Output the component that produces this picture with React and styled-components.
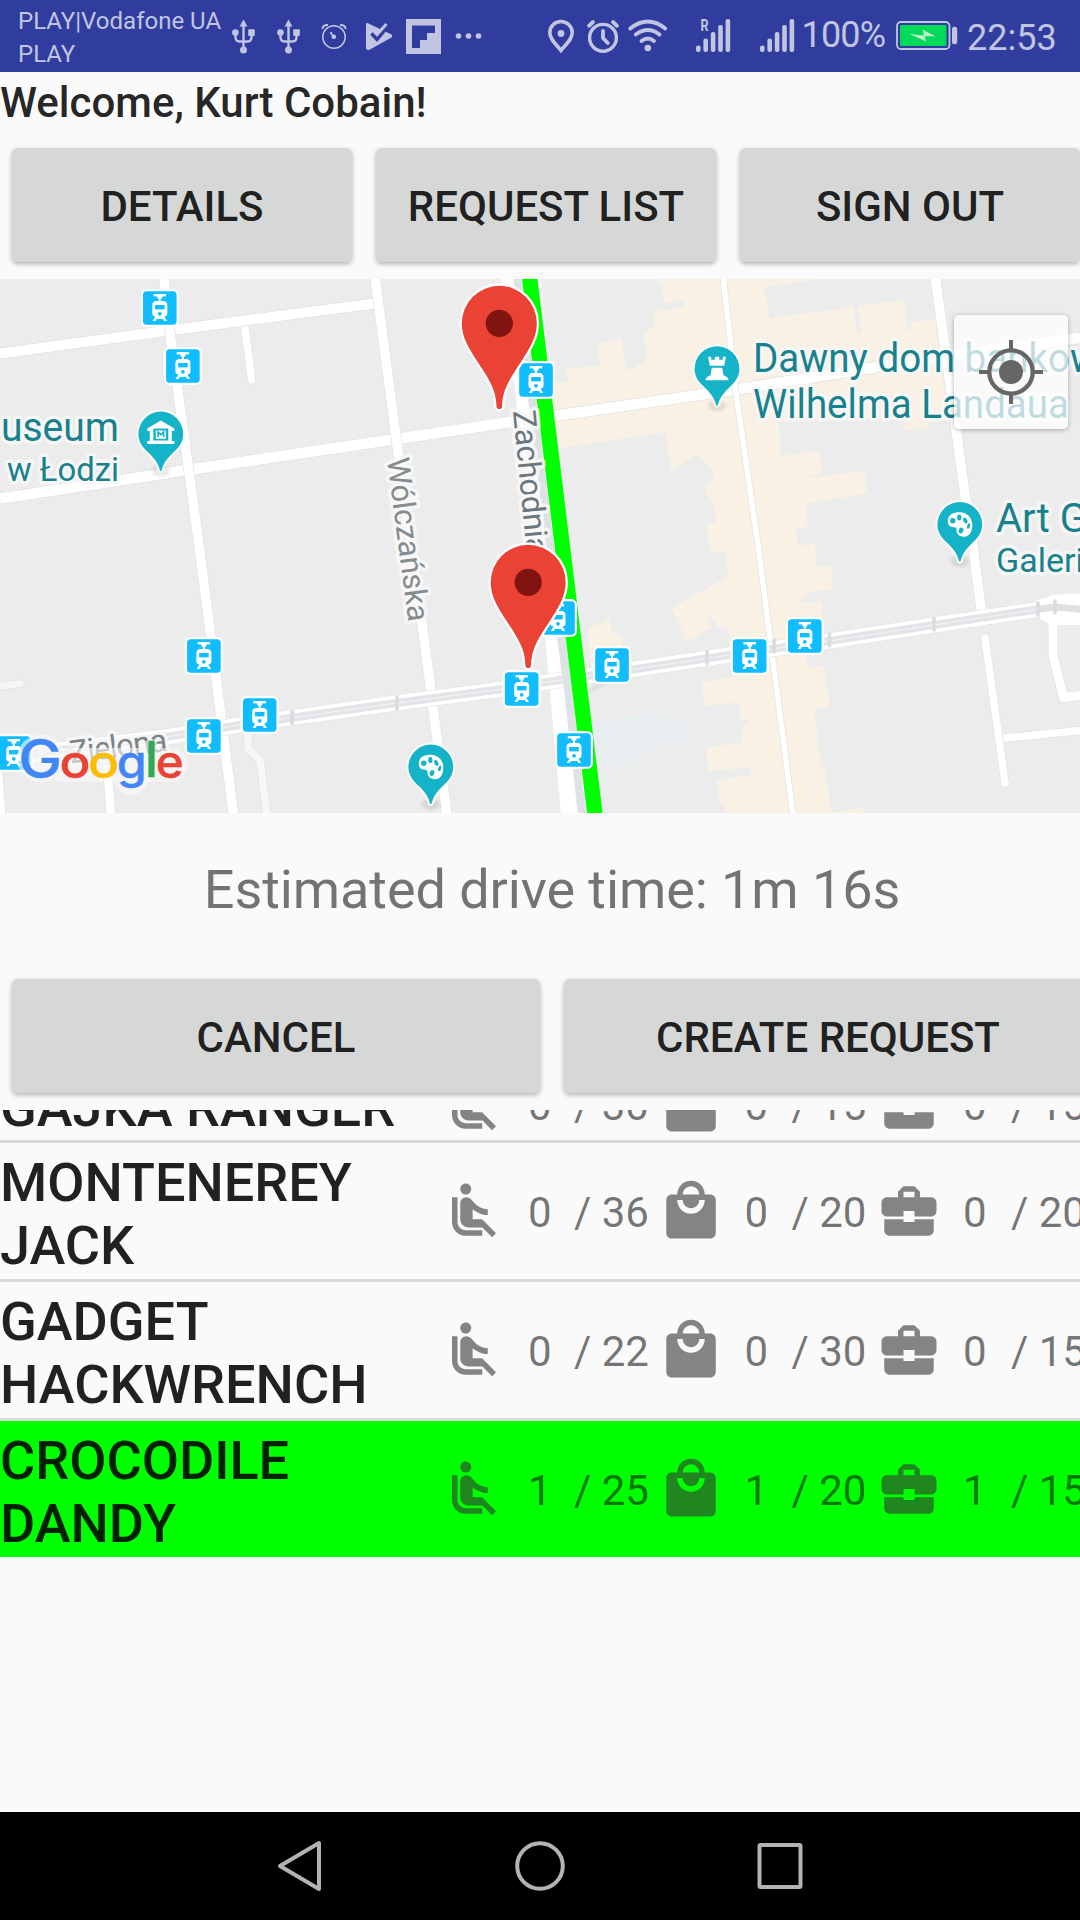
import React from 'react';
import styled, { createGlobalStyle } from 'styled-components';

const Global = createGlobalStyle`
  *, *::before, *::after { box-sizing: border-box; }
  html, body { margin: 0; padding: 0; }
  body {
    width: 1080px;
    height: 1920px;
    overflow: hidden;
    background: #fafafa;
    font-family: Roboto, "Noto Sans", sans-serif;
  }
`;

const Screen = styled.div`
  width: 1080px;
  height: 1920px;
  display: flex;
  flex-direction: column;
  overflow: hidden;
  background: #fafafa;
`;

/* ---------- status bar ---------- */

const StatusBar = styled.header`
  flex: none;
  height: 72px;
  display: flex;
  align-items: flex-start;
  padding-left: 18px;
  background: #303d9f;
  color: #c1c5e2;
`;

const Carrier = styled.div`
  width: 214px;
  padding-top: 5px;
  font-size: 24px;
  line-height: 33px;
  white-space: pre-line;
`;

const StatusIcon = styled.svg`
  flex: none;
  display: block;
  height: 72px;
  width: ${(p) => p.$w}px;
  margin-right: ${(p) => p.$after || 0}px;
  overflow: visible;
  fill: #c1c5e2;
`;

const StatusText = styled.span`
  width: ${(p) => p.$w}px;
  padding-top: ${(p) => p.$top}px;
  font-size: 36px;
  line-height: 42px;
  letter-spacing: ${(p) => p.$track || 0}px;
  white-space: nowrap;
`;

const line = { fill: 'none', stroke: '#c1c5e2' };

const Usb = ({ after }) => (
  <StatusIcon $w={23} $after={after} viewBox="0 0 23 72">
    <path d="M11.5 22v27M3.5 33v4q0 4.5 4 4.5h8q4 0 4-4.5v-4" {...line} strokeWidth="2.4" />
    <path d="M11.5 19.5l4 7h-8z" />
    <circle cx="11.5" cy="50" r="3.5" />
    <circle cx="3.4" cy="32.6" r="3.3" />
    <rect x="16.2" y="29.3" width="6.6" height="6.6" rx="1" />
  </StatusIcon>
);

const Clock = () => (
  <StatusIcon $w={26} $after={19} viewBox="0 0 26 72">
    <circle cx="13" cy="37" r="11.2" {...line} strokeWidth="1.5" />
    <path d="M1.6 29q-.6-4 5.4-4M24.4 29q.6-4-5.4-4" {...line} strokeWidth="2" />
    <path d="M9.5 32.5l3 4" {...line} strokeWidth="1.6" />
    <circle cx="12.8" cy="36.8" r="2.3" />
    <circle cx="10" cy="33" r="1.1" />
  </StatusIcon>
);

const PlayCheck = () => (
  <StatusIcon $w={27} $after={13} viewBox="0 0 27 72">
    <path d="M0 24.500q0-2 2-1.300L25.500 34.500q1.500 1.500 0 3L3 50q-3 .5-3-2z" />
    <path d="M5.500 33.500l5.500 6L22.500 25.500 19 22" {...line} stroke="#303d9f" strokeWidth="3.400" />
    <path d="M10.500 35L20.500 24" {...line} strokeWidth="3" />
  </StatusIcon>
);

const Flip = () => (
  <StatusIcon $w={35} $after={15} viewBox="0 0 35 72">
    <path fillRule="evenodd" d="M0 19h35v35H0zM6 25.500v22.500h8v-8h7v-7h8v-7.500z" />
  </StatusIcon>
);

const Dots = () => (
  <StatusIcon $w={26} $after={66} viewBox="0 0 26 72">
    {[2.5, 12.5, 22.5].map((x) => (
      <circle key={x} cx={x} cy="36" r="2.8" />
    ))}
  </StatusIcon>
);

const Place = () => (
  <StatusIcon $w={26} $after={12.5} viewBox="0 0 26 72">
    <path
      d="M13 50.500C8 44 1.800 39.500 1.800 32.500a11.200 11 0 0 1 22.400 0C24.200 39.500 18 44 13 50.500z"
      {...line}
      strokeWidth="3.6"
    />
    <circle cx="13" cy="33.500" r="3.400" />
  </StatusIcon>
);

const Alarm = () => (
  <StatusIcon $w={32} $after={9.5} viewBox="0 0 32 72">
    <circle cx="16" cy="37.800" r="13.400" {...line} strokeWidth="3.400" />
    <path
      d="M16 31v7l4.800 5M2 25.800l4-3.800M30 25.800l-4-3.800"
      {...line}
      strokeWidth="3.800"
      strokeLinecap="round"
    />
  </StatusIcon>
);

const Wifi = () => (
  <StatusIcon $w={40} $after={27.5} viewBox="0 0 40 72">
    <g {...line} strokeWidth="3.800" strokeLinecap="round">
      <path d="M2.200 28.500Q20 14.500 37.200 28.500" />
      <path d="M7.800 34.500Q20 25.500 31.500 34.500" />
      <path d="M13.500 41Q20 36 26 41" />
    </g>
    <circle cx="19.800" cy="48" r="3.300" />
  </StatusIcon>
);

const Signal = ({ roaming, after }) => (
  <StatusIcon $w={34} $after={after} viewBox="0 0 34 72">
    {[45.5, 38.5, 32, 25, 19].map((top, i) => (
      <rect key={top} x={i * 7.4} y={top} width="4.6" height={52 - top} rx="2" />
    ))}
    {roaming && (
      <text x="4.500" y="31" fontSize="16" fontWeight="700" textLength="8" lengthAdjust="spacingAndGlyphs">
        R
      </text>
    )}
  </StatusIcon>
);

const Battery = () => (
  <StatusIcon $w={62} $after={9.5} viewBox="0 0 62 72">
    <rect x="1" y="22" width="52.500" height="27" rx="4" {...line} strokeWidth="1.800" />
    <rect x="4" y="25" width="46.500" height="21" rx="1" fill="#00d95a" />
    <path d="M13.500 34l14.500 1.500-1.500-6 13.500 7-11-.500 1 5.500z" fill="#b5f3cc" />
    <rect x="56" y="26.700" width="5.200" height="17.600" rx="2.400" />
  </StatusIcon>
);

/* ---------- common parts ---------- */

const Welcome = styled.h1`
  flex: none;
  height: 64px;
  margin: 0;
  padding-top: 6px;
  font-size: 42px;
  line-height: 49px;
  font-weight: 500;
  color: rgba(0, 0, 0, 0.87);
`;

const ButtonRow = styled.div`
  flex: none;
  width: 1104px;
  height: 143px;
  display: flex;
  align-items: flex-start;
  gap: 24px;
  padding: 12px 12px 0;
`;

const Button = styled.button`
  flex: none;
  width: ${(p) => p.$w}px;
  height: 114px;
  padding: 4px 0 0;
  border: 0;
  border-radius: 6px;
  background: #d6d8d7;
  color: rgba(0, 0, 0, 0.87);
  font: 500 42px/50px Roboto, sans-serif;
  text-align: center;
  text-transform: uppercase;
  white-space: nowrap;
  box-shadow: 0 2px 5px rgba(0, 0, 0, 0.3);
`;

const Estimate = styled.p`
  flex: none;
  width: 1104px;
  height: 154px;
  margin: 0;
  padding-top: 45px;
  font-size: 54px;
  line-height: 63px;
  letter-spacing: -0.09px;
  text-align: center;
  color: rgba(0, 0, 0, 0.54);
`;

/* ---------- map ---------- */

const MapFrame = styled.section`
  flex: none;
  position: relative;
  width: 1080px;
  height: 534px;
  overflow: hidden;
  background: #ececec;
`;

const MapCanvas = styled.svg`
  display: block;
  width: 1080px;
  height: 534px;
  font-family: Roboto, sans-serif;
`;

const LocateButton = styled.button`
  position: absolute;
  top: 36px;
  right: 12px;
  width: 114px;
  height: 114px;
  display: grid;
  place-items: center;
  padding: 0;
  border: 0;
  border-radius: 5px;
  background: rgba(255, 255, 255, 0.72);
  box-shadow: 0 1px 5px rgba(0, 0, 0, 0.3);
`;

const Halo = styled.text`
  paint-order: stroke;
  stroke: rgba(248, 248, 248, 0.85);
  stroke-width: 7px;
  stroke-linejoin: round;
  fill: ${(p) => p.$fill || '#17818d'};
`;

const Road = ({ d, w = 9.5, c = '#fff', round }) => (
  <>
    <path d={d} fill="none" stroke="#e2e2e2" strokeWidth={w + 1.4} strokeLinecap={round ? 'round' : 'butt'} />
    <path d={d} fill="none" stroke={c} strokeWidth={w} strokeLinecap={round ? 'round' : 'butt'} strokeLinejoin="round" />
  </>
);

const Tram = ({ x, y }) => (
  <g transform={`translate(${x} ${y})`}>
    <rect x="-19" y="-19" width="38" height="38" rx="6" fill="#fff" />
    <rect x="-16.800" y="-16.700" width="33.600" height="33.400" rx="3.500" fill="#12bdff" />
    <g fill="#fff">
      <rect x="-6.200" y="-14" width="12.400" height="2.400" />
      <path d="M-2.500-12h5v2.500h-1.500v3h-2v-3h-1.500z" />
      <path d="M-4.500-7h9q3 1 3 4v9q0 2-3 2.600l2.700 4.400h-3l-1-1.900h-6.400l-1 1.900h-3l2.700-4.400q-3-.6-3-2.600v-9q0-3 3-4z" />
    </g>
    <rect x="-4.800" y="-3" width="9.600" height="4.400" fill="#12bdff" />
    <circle cy="5.800" r="1.900" fill="#12bdff" />
  </g>
);

const Marker = ({ x, y }) => (
  <g transform={`translate(${x} ${y})`}>
    <path
      d="M-37.500 0A37.500 37.500 0 0 1 37.500 0C37.500 14 30.500 25 22.500 37.500 11 55 3 66 2.800 83a2.800 2.800 0 0 1-5.600 0C-3 66-11 55-22.500 37.500-30.500 25-37.500 14-37.500 0z"
      fill="#ea4335"
      stroke="#fff"
      strokeWidth="4.500"
      paintOrder="stroke"
    />
    <circle r="13.600" fill="#7f1410" />
  </g>
);

const Poi = ({ x, y, children }) => (
  <g transform={`translate(${x} ${y})`}>
    <ellipse cy="37" rx="11" ry="7" fill="rgba(0,0,0,.03)" />
    <ellipse cy="37" rx="8" ry="5" fill="rgba(0,0,0,.05)" />
    <path
      d="M-22.400 0A22.400 22.400 0 0 1 22.400 0C22.400 9 17 14.500 11.500 19.500 5 26 2.500 30 .8 36.500q-.8 1.200-1.600 0C-2.500 30-5 26-11.500 19.500-17 14.500-22.400 9-22.400 0z"
      fill="#15b3c8"
      stroke="#fafafa"
      strokeWidth="4"
      paintOrder="stroke"
    />
    {children}
  </g>
);

const Palette = () => (
  <>
    <path d="M-12 -3.500C-12-11-5-12.500 0-12.300 8-12 13-6 12.500 1.500 12.300 8 9 12.500 4 12.300-1 12-3.500 9-3.200 5.500-3 2.500-5.500 3-8 2.500-10.500 2-12 0-12-3.500z" fill="#fff" />
    <g fill="#15b3c8">
      <circle cx="-7" cy="-3.800" r="2.700" />
      <ellipse cx="-.5" cy="-7" rx="2.200" ry="3" />
      <ellipse cx="5.500" cy="-4" rx="1.900" ry="3" transform="rotate(-25 5.500 -4)" />
      <ellipse cx="8.800" cy="1.500" rx="1.500" ry="2.900" transform="rotate(20 8.800 1.500)" />
      <ellipse cx="1.200" cy="6" rx="2.300" ry="3" transform="rotate(20 1.200 6)" />
    </g>
  </>
);

const Castle = () => (
  <path d="M-9-12h3.200v3h3.600v-3h4.400v3h3.600v-3H9L7.200-3H-7.200zM-5.200-1H5.200L6.500 6.500Q11.500 8.500 11.500 11.500H-11.500Q-11.500 8.500-6.500 6.500z" fill="#fff" />
);

const Museum = () => (
  <>
    <path d="M0-13.500L13.500-5.500V-3H11V7h2.500v3h-27V7h2.500V-3h-2.500v-2.500z" fill="#fff" />
    <path d="M-7.500-5.500h15V6.500h-15z" fill="#15b3c8" />
    <path d="M-5-3.500H5V4.800H-5z" fill="#fff" />
    <path d="M-2.800 3.300v-5.300l2.800 2.800 2.800-2.800v5.300" fill="none" stroke="#15b3c8" strokeWidth="1.600" />
  </>
);

const TRAM =
  'M-4 760L60 750 172 736 234 726 396 703 503 689 540 683 636 669 729 655 829 641 934 625 1040 609';
const ZACH = 'M517 275L559 620 568 690 582 815';
const TRAMS = [
  [159.8, 308], [182.9, 366], [536, 380], [203.9, 656], [259.7, 715], [203.9, 736],
  [521.7, 689], [13.8, 753], [558, 618], [612, 665], [749.7, 656], [804.8, 636], [574, 750],
];
const TICKS = [
  [292, 717.5], [397, 703], [707, 657.5], [774, 646], [829.5, 640], [934, 624], [1038, 609], [1055, 607],
];
const LOGO = [
  ['G', 18.5, 777.5, 53, '#4285f4', 43.5],
  ['o', 59.5, 777.5, 46, '#ea4335', 31],
  ['o', 88.1, 777.5, 46, '#fbbc05', 31],
  ['g', 116.8, 777.5, 46, '#4285f4', 30],
  ['l', 145, 777, 49, '#34a853', 13],
  ['e', 155.8, 777.5, 46, '#ea4335', 28],
];

const CityMap = () => (
  <MapCanvas viewBox="0 279 1080 534">
    <rect y="279" width="1080" height="534" fill="#ececec" />
    <g fill="#f9f1e3">
      <g transform="translate(540 270) scale(.34435 .33333)">
        <path d="M340 27L355 45 360 98 415 90 423 108 328 127 333 165 300 195 312 270 252 305 237 208 165 220 175 285 75 297 82 332 20 342 40 536 365 487 381 600 457 552 502 600 502 625 477 662 505 700 513 757 483 762 493 845H750L743 775 777 770 772 700 952 670 941 602 758 627 818 611 812 543 700 558 693 455 1057 440 1060 480 1125 472 1130 445 1185 440 1165 300 1147 148 1076 157 1080 178 1067 182 1058 90 925 108 934 187 920 190 912 112 667 145 650 52 815 27z" />
      </g>
      <g transform="translate(540 540) scale(.34435 .33333)">
        <path d="M490 0L495 20 515 15 537 37 548 107 382 205 428 305 500 265 485 230 492 222 523 270 547 262 558 412 470 428 477 497 578 487 584 540 603 541V556L583 558 586 607 482 623 491 694 612 682 613 705 514 720 522 790 535 792 538 822H940L938 803 845 818 828 680 815 678 797 508 842 500 825 378 780 384 773 350 820 240 817 183 755 190 752 176 773 172 770 158 852 147 844 77 804 80 798 12 748 17 745 0z" />
        <path d="M137 268L203 235 208 275 240 290 245 390 150 390z" />
      </g>
    </g>
    <path d="M592 720L653 714 686 720V742L641 751 639 764 598 767z" fill="#e8edf0" />

    <Road d="M0 686L20.500 683.500" w={7} c="#f6f6f6" round />
    <Road d="M248 730V748L260 760 267 815" w={7.5} c="#f7f7f7" />
    <Road d="M107 765L111 815" w={8.5} />
    <Road d="M-2 765L2 815" w={7} />
    <Road d="M244.500 325L251.700 380" w={7.5} round />
    <Road d="M0 353.500L172 330 378 303" w={10} />
    <Road d="M0 498.500L187.700 470 513 421.700" w={10.5} />
    <Road d="M540 418L733 390 953 355 1080 338" w={10.5} />
    <Road d="M163.500 275L170.500 337 199 545 220.500 713 233.500 815" />
    <Road d="M374.700 275L399 460 422 623 447 815" />
    <Road d="M723 275L736 393 758 545 793 815" w={5.5} />
    <Road d="M935 275L965.300 497 972 540 981.500 612" />
    <Road d="M1001 738.500L1080 730.500" w={7.5} />
    <Road d="M985 638L1005 783" w={7.5} round />
    <Road d="M1053 620V655L1063.500 697.500 1084 695" w={9} />
    <path d="M1030 603L1053 595 1084 593V625H1050L1038 617z" fill="#fff" />
    <path d="M501 275L545 637 561 815H590L540 275z" fill="#fff" />

    <Road d={TRAM} w={15} />
    <path d={TRAM} fill="none" stroke="#e2e4e7" strokeWidth="8" />
    <path d={TRAM} fill="none" stroke="#eff0f1" strokeWidth="1.300" />
    <path d="M1038 609L1056 607 1084 609.500" fill="none" stroke="#dfe1e4" strokeWidth="7" />
    <path d={ZACH} fill="none" stroke="#dfe2e5" strokeWidth="8" />
    <path d="M588 692L606 682" stroke="#e0e2e4" strokeWidth="5" />
    {TICKS.map(([x, y]) => (
      <path key={x} d={`M${x} ${y - 6}v12`} stroke="#d9dcdf" strokeWidth="3.500" strokeLinecap="round" />
    ))}

    <path d="M529.300 275L595.300 817" stroke="#00ff00" strokeWidth="15.400" />

    <Halo $fill="#858c90" fontSize="31" textLength="165" transform="translate(387 459) rotate(82.500)">Wólczańska</Halo>
    <Halo $fill="#6b777f" fontSize="31.500" textLength="145" transform="translate(513 411) rotate(84.500)">Zachodnia</Halo>
    <Halo $fill="#7b8387" fontSize="32" textLength="98" transform="translate(71 763.500) rotate(-7.500)">Zielona</Halo>

    {TRAMS.map(([x, y]) => (
      <Tram key={`${x}-${y}`} x={x} y={y} />
    ))}

    <Halo fontSize="40" x="1" y="441" textLength="118" lengthAdjust="spacingAndGlyphs">useum</Halo>
    <Halo fontSize="34" x="7" y="480.500" textLength="112" lengthAdjust="spacingAndGlyphs">w Łodzi</Halo>
    <Halo fontSize="40" x="753" y="372.300" textLength="346" lengthAdjust="spacingAndGlyphs">Dawny dom bankow</Halo>
    <Halo fontSize="40" x="753" y="418" textLength="316" lengthAdjust="spacingAndGlyphs">Wilhelma Landaua</Halo>
    <Halo fontSize="40" x="996" y="531.700">Art G</Halo>
    <Halo fontSize="34" x="996" y="572">Galeri</Halo>

    <Poi x={160.800} y={434}><Museum /></Poi>
    <Poi x={717} y={368.700}><Castle /></Poi>
    <Poi x={959.800} y={524.500}><Palette /></Poi>
    <Poi x={430.800} y={767}><Palette /></Poi>

    <Marker x={499.300} y={323.300} />
    <Marker x={528.200} y={582.300} />

    <g fontFamily="Inter, sans-serif" fontWeight="500">
      <g fill="none" stroke="#fafafa" strokeLinecap="round" opacity=".6">
        <path d="M41 758.500h.01" strokeWidth="48" />
        <path d="M62 765H171M131 765v13" strokeWidth="34" />
        <path d="M151 746v20" strokeWidth="14" />
      </g>
      {LOGO.map(([ch, x, y, size, fill, len], i) => (
        <text
          key={i}
          x={x}
          y={y}
          fontSize={size}
          fill={fill}
          stroke={fill}
          strokeWidth=".4"
          textLength={len}
          lengthAdjust="spacingAndGlyphs"
        >
          {ch}
        </text>
      ))}
    </g>
  </MapCanvas>
);

const Locate = () => (
  <svg width="66" height="66" viewBox="-33 -33 66 66">
    <circle r="21.700" fill="none" stroke="#666" strokeWidth="4.300" />
    <circle r="12" fill="#666" />
    <path d="M-32 0h9M23 0h9M0-32v9M0 23v9" stroke="#666" strokeWidth="4" />
  </svg>
);

/* ---------- driver list ---------- */

const List = styled.div`
  flex: 1;
  min-height: 0;
  overflow: hidden;
`;

const Scrolled = styled.ul`
  margin: -42px 0 0;
  padding: 0;
  list-style: none;
`;

const Row = styled.li`
  display: flex;
  align-items: flex-start;
  width: 1104px;
  height: ${(p) => (p.$lines === 1 ? 72 : 136)}px;
  background: ${(p) => (p.$selected ? '#00ff00' : 'transparent')};

  & + & {
    margin-top: 3px;
    box-shadow: 0 -3px 0 #dadada;
  }
`;

const Name = styled.div`
  flex: none;
  width: 441px;
  padding-top: 8px;
  font-size: 54px;
  line-height: 63px;
  font-weight: 500;
  white-space: pre-line;
  color: rgba(0, 0, 0, 0.87);
`;

const Stats = styled.div`
  flex: none;
  height: 100%;
  display: grid;
  grid-template-columns: 216.5px 218.5px 228px;
  align-items: center;
`;

const Stat = styled.div`
  display: flex;
  align-items: center;
  font-size: 42px;
  line-height: 50px;
  white-space: nowrap;
  color: rgba(0, 0, 0, 0.54);
`;

const StatIcon = styled.svg`
  flex: none;
  width: 66px;
  height: 66px;
  margin-right: 21px;
  fill: rgba(54, 54, 54, 0.6);
`;

const Used = styled.span`
  width: ${(p) => p.$w}px;
  padding-top: 4px;
`;

const Total = styled.span`
  padding-top: 4px;
`;

const STATS = [
  {
    w: 46,
    icon: 'M7.59 5.41c-.78-.78-.78-2.05 0-2.83.78-.78 2.05-.78 2.83 0 .78.78.78 2.05 0 2.83-.79.79-2.05.79-2.83 0zM6 16V7H4v9c0 2.760 2.240 5 5 5h6v-2H9c-1.660 0-3-1.340-3-3zm14 4.070L14.930 15H11.500v-3.680c1.400 1.150 3.600 2.160 5.500 2.160v-2.160c-1.660.020-3.610-.870-4.670-2.040l-1.400-1.550c-.190-.210-.430-.380-.690-.500-.290-.140-.620-.230-.960-.230h-.030C8.010 7 7 8.010 7 9.250V15c0 1.660 1.340 3 3 3h5.070l3.500 3.500L20 20.070z',
  },
  {
    w: 47,
    icon: 'M19 6h-2c0-2.760-2.240-5-5-5S7 3.240 7 6H5c-1.100 0-1.990.9-1.990 2L3 20c0 1.100.9 2 2 2h14c1.100 0 2-.9 2-2V8c0-1.100-.9-2-2-2zm-7-3c1.660 0 3 1.340 3 3H9c0-1.660 1.340-3 3-3zm0 10c-2.760 0-5-2.240-5-5h2c0 1.660 1.340 3 3 3s3-1.340 3-3h2c0 2.760-2.240 5-5 5z',
  },
  {
    w: 48,
    icon: 'M10 16v-1H3.010L3 19c0 1.110.89 2 2 2h14c1.110 0 2-.89 2-2v-4h-7v1h-4zm10-9h-4.010V5l-2-2h-4l-2 2v2H4c-1.100 0-2 .9-2 2v3c0 1.110.89 2 2 2h6v-2h4v2h6c1.100 0 2-.9 2-2V9c0-1.100-.9-2-2-2zm-6 0h-4V5h4v2z',
  },
];

const DRIVERS = [
  { name: 'GAJKA RANGER', lines: 1, used: 0, totals: [30, 15, 15] },
  { name: 'MONTENEREY\nJACK', used: 0, totals: [36, 20, 20] },
  { name: 'GADGET\nHACKWRENCH', used: 0, totals: [22, 30, 15] },
  { name: 'CROCODILE\nDANDY', used: 1, totals: [25, 20, 15], selected: true },
];

/* ---------- navigation bar ---------- */

const NavBar = styled.nav`
  flex: none;
  height: 108px;
  display: flex;
  justify-content: center;
  align-items: center;
  gap: 190px;
  background: #000;
`;

const NavIcon = styled.svg`
  width: 50px;
  height: 52px;
  fill: none;
  stroke: #b3b3b3;
  stroke-width: 4px;
  stroke-linejoin: round;
`;

export default function App() {
  return (
    <Screen>
      <Global />
      <StatusBar>
        <Carrier>{'PLAY|Vodafone UA\nPLAY'}</Carrier>
        <Usb after={22} />
        <Usb after={21} />
        <Clock />
        <PlayCheck />
        <Flip />
        <Dots />
        <Place />
        <Alarm />
        <Wifi />
        <Signal roaming after={30} />
        <Signal after={8} />
        <StatusText $w={94} $top={14} $track={-0.8}>100%</StatusText>
        <Battery />
        <StatusText $w={92} $top={17}>22:53</StatusText>
      </StatusBar>

      <Welcome>Welcome, Kurt Cobain!</Welcome>

      <ButtonRow>
        <Button $w={340}>Details</Button>
        <Button $w={340}>Request list</Button>
        <Button $w={340}>Sign out</Button>
      </ButtonRow>

      <MapFrame>
        <CityMap />
        <LocateButton aria-label="My location">
          <Locate />
        </LocateButton>
      </MapFrame>

      <Estimate>Estimated drive time: 1m 16s</Estimate>

      <ButtonRow>
        <Button $w={528}>Cancel</Button>
        <Button $w={528}>Create request</Button>
      </ButtonRow>

      <List>
        <Scrolled>
          {DRIVERS.map((d) => (
            <Row key={d.name} $lines={d.lines} $selected={d.selected}>
              <Name>{d.name}</Name>
              <Stats>
                {STATS.map((s, i) => (
                  <Stat key={i}>
                    <StatIcon viewBox="0 0 24 24">
                      <path d={s.icon} />
                    </StatIcon>
                    <Used $w={s.w}>{d.used}</Used>
                    <Total>/ {d.totals[i]}</Total>
                  </Stat>
                ))}
              </Stats>
            </Row>
          ))}
        </Scrolled>
      </List>

      <NavBar>
        <NavIcon viewBox="0 0 50 52">
          <path d="M5 26L44 3v46z" />
        </NavIcon>
        <NavIcon viewBox="0 0 50 52">
          <circle cx="25" cy="26" r="22.800" />
        </NavIcon>
        <NavIcon viewBox="0 0 50 52">
          <rect x="4.500" y="5" width="41" height="42" rx="1" />
        </NavIcon>
      </NavBar>
    </Screen>
  );
}
